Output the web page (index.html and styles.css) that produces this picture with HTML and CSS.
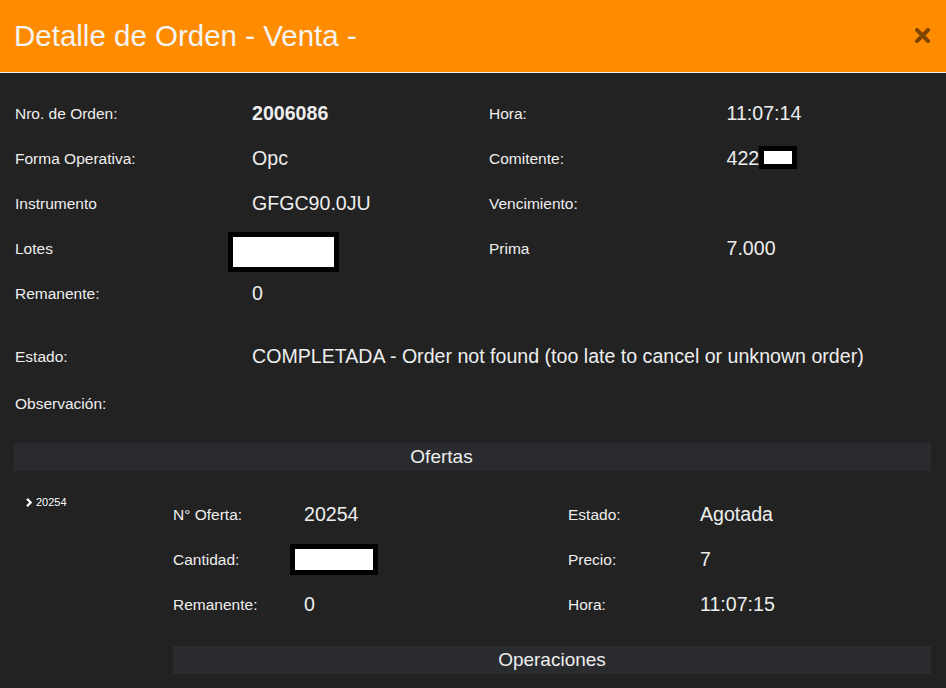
FILE: index.html
```html
<!DOCTYPE html>
<html lang="es">
<head>
<meta charset="utf-8">
<title>Detalle de Orden</title>
<link rel="stylesheet" href="styles.css">
</head>
<body>
<div class="modal">
  <header class="modal-header">
    <h4 class="modal-title">Detalle de Orden - Venta -</h4>
    <button class="close" type="button" aria-label="Cerrar">
      <svg width="15" height="15" viewBox="0 0 15 15"><path d="M2 2 L13 13 M13 2 L2 13" stroke="#000" stroke-width="4" stroke-linecap="square" fill="none"/></svg>
    </button>
  </header>
  <div class="modal-body">
    <div class="grid4">
      <div class="lbl">Nro. de Orden:</div><div class="val bold">2006086</div>
      <div class="lbl">Hora:</div><div class="val">11:07:14</div>

      <div class="lbl">Forma Operativa:</div><div class="val">Opc</div>
      <div class="lbl">Comitente:</div><div class="val">422<span class="redact redact-sm"></span></div>

      <div class="lbl">Instrumento</div><div class="val">GFGC90.0JU</div>
      <div class="lbl">Vencimiento:</div><div class="val"></div>

      <div class="lbl">Lotes</div><div class="val"><span class="redact redact-lotes"></span></div>
      <div class="lbl">Prima</div><div class="val">7.000</div>

      <div class="lbl">Remanente:</div><div class="val">0</div>
      <div></div><div></div>
    </div>

    <div class="grid4 status">
      <div class="lbl">Estado:</div><div class="val wide">COMPLETADA - Order not found (too late to cancel or unknown order)</div>
      <div class="lbl">Observación:</div><div class="val wide"></div>
    </div>

    <div class="section-bar main">Ofertas</div>

    <div class="offer">
      <div class="offer-id">
        <svg class="chev" width="6" height="9" viewBox="0 0 6 9"><path d="M1 0.8 L4.6 4.5 L1 8.2" stroke="#fff" stroke-width="2.2" fill="none"/></svg>
        <span>20254</span>
      </div>
      <div class="offer-detail">
        <div class="grid-offer">
          <div class="lbl">N° Oferta:</div><div class="val">20254</div>
          <div class="lbl">Estado:</div><div class="val">Agotada</div>

          <div class="lbl">Cantidad:</div><div class="val"><span class="redact redact-cant"></span></div>
          <div class="lbl">Precio:</div><div class="val">7</div>

          <div class="lbl">Remanente:</div><div class="val">0</div>
          <div class="lbl">Hora:</div><div class="val">11:07:15</div>
        </div>
        <div class="section-bar sub">Operaciones</div>
      </div>
    </div>
  </div>
</div>
</body>
</html>
```

FILE: styles.css
```css
* { box-sizing: border-box; }

html, body {
  margin: 0;
  padding: 0;
  background: #222222;
  height: 100%;
  overflow: hidden;
}

body {
  font-family: "Liberation Sans", Arial, sans-serif;
  color: #eeeeee;
}

.modal {
  width: 946px;
  min-height: 688px;
  background: #222222;
}

.modal-header {
  height: 73px;
  background: #ff8c00;
  border-bottom: 1px solid #eeeeee;
  display: flex;
  align-items: center;
  justify-content: space-between;
  padding: 0 16px 1px 14px;
}

.modal-title {
  margin: 0;
  font-size: 29.5px;
  font-weight: normal;
  line-height: 34px;
  color: #f4f4f4;
}

.close {
  background: none;
  border: 0;
  padding: 0;
  opacity: 0.5;
  display: flex;
  cursor: pointer;
}

.modal-body {
  padding: 18px 15px 0 14px;
}

.grid4 {
  display: grid;
  grid-template-columns: 237px 237px 237.5px 1fr;
  grid-auto-rows: 45px;
  align-items: center;
  margin: 0 -15px 0 -14px;
}

.lbl, .val {
  padding: 0 15px;
}

.lbl {
  font-size: 15.5px;
  color: #eeeeee;
}

.val {
  font-size: 19.6px;
  color: #eeeeee;
  display: flex;
  align-items: center;
}

.bold { font-weight: bold; }

.status {
  margin-top: 18px;
  row-gap: 2px;
}

.status .wide {
  grid-column: 2 / span 3;
}

.redact {
  display: inline-block;
  background: #ffffff;
  border: 5px solid #000000;
}

.redact-sm {
  width: 38px;
  height: 23px;
  margin-left: 0;
  margin-top: -3px;
}

.redact-lotes {
  width: 111px;
  height: 40px;
  margin-left: -24px;
  margin-top: 7px;
}

.redact-cant {
  width: 88px;
  height: 31px;
  margin-left: -14px;
}

.section-bar {
  height: 28px;
  background: #2a2b2e;
  text-align: center;
  font-size: 19px;
  line-height: 28px;
  color: #eeeeee;
}

.section-bar.main {
  margin-top: 17px;
  padding-right: 62px;
}

.offer {
  display: grid;
  grid-template-columns: 158px 1fr;
  margin: 0 -15px 0 -14px;
}

.offer-id {
  padding: 25px 0 0 26px;
  font-size: 11px;
  line-height: 13px;
  color: #ffffff;
  display: flex;
  align-items: center;
  gap: 4px;
  align-self: start;
}

.chev { display: block; }

.offer-detail {
  padding: 21px 15px 0 15px;
}

.grid-offer {
  display: grid;
  grid-template-columns: 131px 264px 132px 1fr;
  grid-auto-rows: 45px;
  align-items: center;
  margin: 0 -15px;
}

.section-bar.sub {
  margin-top: 19px;
}
```
